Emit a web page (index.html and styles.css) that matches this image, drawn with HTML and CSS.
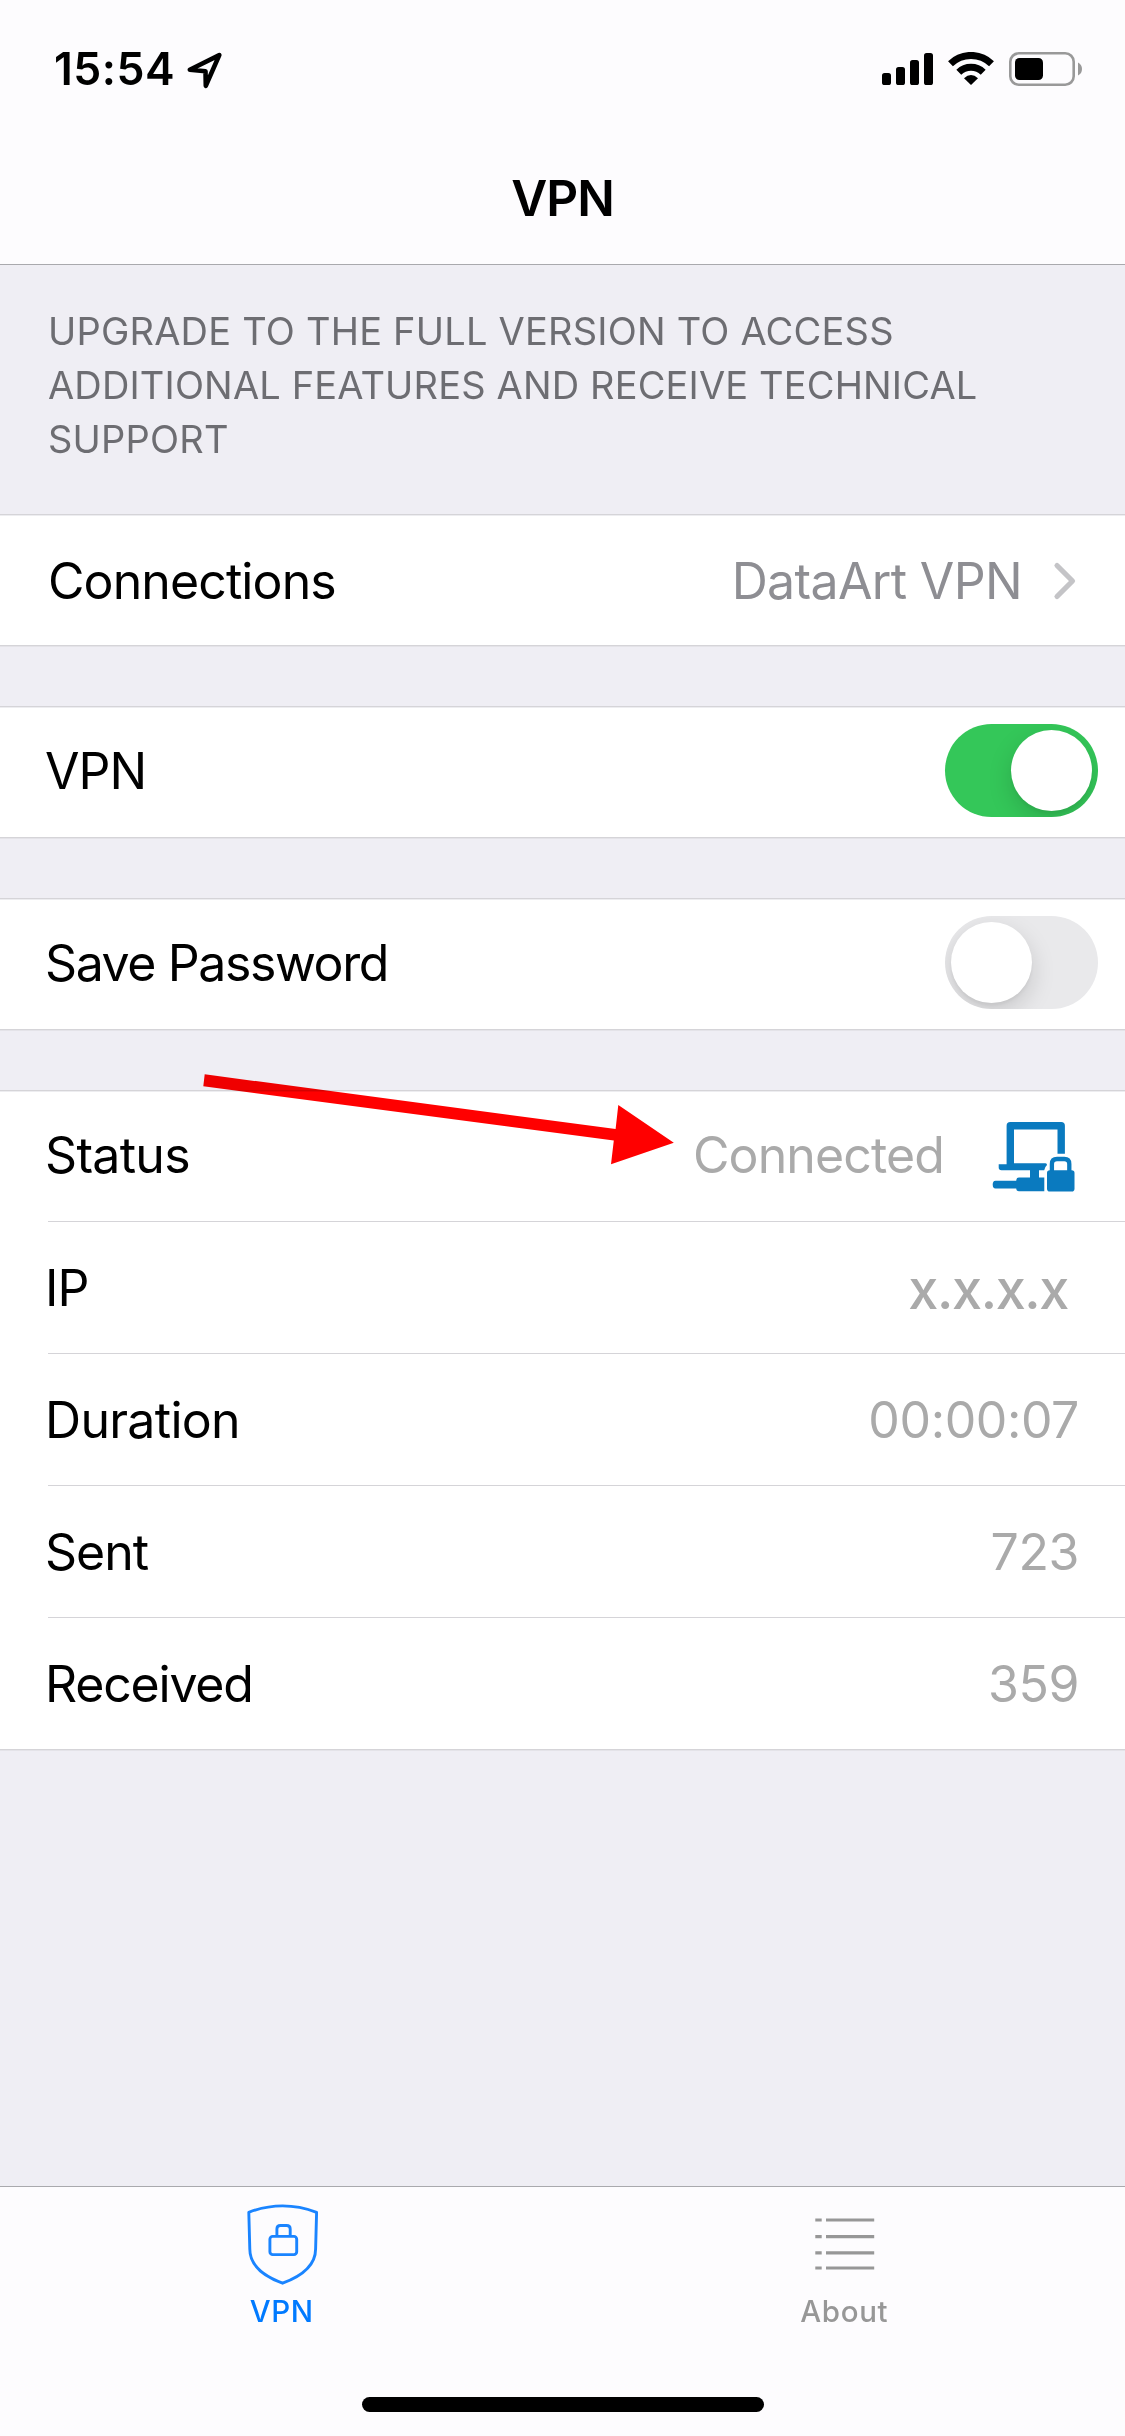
FILE: index.html
```html
<!DOCTYPE html>
<html lang="en">
<head>
<meta charset="utf-8">
<title>VPN</title>
<link rel="stylesheet" href="styles.css">
</head>
<body>
<div class="screen">
  <header class="header">
    <div class="status-bar">
      <span class="clock">15:54</span>
      <svg class="location" width="36" height="37" viewBox="0 0 36 37"><path d="M2.8 17.8 32.3 3.1 18.8 33.8 18.5 19.2Z" fill="none" stroke="#000" stroke-width="4.6" stroke-linejoin="round"/></svg>
      <svg class="signal" width="51" height="32" viewBox="0 0 51 32"><rect y="20" width="9" height="12" rx="2.6"/><rect x="14" y="14" width="9" height="18" rx="2.6"/><rect x="28" y="7" width="9" height="25" rx="2.6"/><rect x="42" width="9" height="32" rx="2.6"/></svg>
      <svg class="wifi" width="46" height="33" viewBox="0 0 46 33"><g fill="none" stroke="#000" stroke-width="7"><path d="M2.5 11.7A29.5 29.5 0 0 1 43.5 11.7"/><path d="M10.8 20.2A17.5 17.5 0 0 1 35.2 20.2"/></g><path d="M16 26.2Q23 20 30 26.2L23 33Z"/></svg>
      <svg class="battery" width="73" height="34" viewBox="0 0 73 34"><rect x="1.3" y="1.3" width="63.4" height="31.4" rx="8.5" fill="none" stroke="#999" stroke-width="2.6"/><rect x="6" y="6" width="28" height="22" rx="4.5"/><path d="M69 10.5Q73 12.5 73 17T69 23.5Z" fill="#999"/></svg>
    </div>
    <h1 class="title">VPN</h1>
  </header>

  <main class="content">
    <p class="notice">UPGRADE TO THE FULL VERSION TO ACCESS<br><span class="tight">ADDITIONAL FEATURES AND RECEIVE TECHNICAL</span><br>SUPPORT</p>

    <section class="group">
      <div class="row link">
        <span class="label connections">Connections</span>
        <span class="detail">DataArt VPN</span>
        <svg class="chevron" width="24" height="40" viewBox="0 0 24 40"><path d="M4 4.5 19.5 20 4 35.5" fill="none" stroke="#c4c4c7" stroke-width="5.2" stroke-linecap="round" stroke-linejoin="round"/></svg>
      </div>
    </section>
    <section class="group">
      <div class="row">
        <span class="label">VPN</span>
        <span class="toggle on"><span class="knob"></span></span>
      </div>
    </section>
    <section class="group">
      <div class="row">
        <span class="label save">Save Password</span>
        <span class="toggle"><span class="knob"></span></span>
      </div>
    </section>
    <section class="group">
      <div class="row">
        <span class="label loose">Status</span>
        <span class="value connected">Connected</span>
        <svg class="computer" width="84" height="72" viewBox="992 1121 84 72" fill="#0a7abf"><path d="M1010.3 1166V1125.7H1061.2V1153.7" fill="none" stroke="#0a7abf" stroke-width="7.4" stroke-linejoin="round"/><path d="M998.7 1164.3H1008V1163.2H1045.5Q1047 1163.2 1047 1165Q1044.7 1167 1044.2 1170.3H1001.5Q998.7 1170.3 998.7 1167.5Z"/><path d="M1030 1170H1039V1177.5H1044.3V1191.2H1019Q1016.2 1191.2 1016.2 1188.5H995.5Q992.7 1188.5 992.7 1184.6T995.5 1180.7H1016.2Q1016.2 1177.5 1019 1177.5H1030Z"/><path d="M1051.9 1172V1164Q1051.9 1159 1057 1159H1064.3Q1069.3 1159 1069.3 1164V1172" fill="none" stroke="#0a7abf" stroke-width="4.3"/><rect x="1047" y="1170.2" width="27.5" height="21.4" rx="2.8"/></svg>
      </div>
      <div class="row">
        <span class="label">IP</span>
        <span class="value ip">x.x.x.x</span>
      </div>
      <div class="row">
        <span class="label loose">Duration</span>
        <span class="value num">00:00:07</span>
      </div>
      <div class="row">
        <span class="label">Sent</span>
        <span class="value num">723</span>
      </div>
      <div class="row">
        <span class="label received">Received</span>
        <span class="value num">359</span>
      </div>
    </section>
  </main>

  <nav class="tabs">
    <div class="tab active">
      <svg width="76" height="84" viewBox="245 2203 76 84" fill="none" stroke="#1a84ff" stroke-width="2.9" stroke-linejoin="round"><path d="M248.8 2212.3Q282.5 2199.5 316.6 2212.3L315.6 2249C315.6 2266 302 2276 282.6 2283.2C263 2276 249.8 2266 249.8 2249Z"/><rect x="269.9" y="2236.4" width="26.8" height="18.2" rx="2.8"/><path d="M276.9 2236V2229Q276.9 2225.5 280.4 2225.5H286.6Q290.2 2225.5 290.2 2229V2236"/></svg>
      <span>VPN</span>
    </div>
    <div class="tab about">
      <svg width="60" height="84" viewBox="815 2203 60 84" fill="none" stroke="#979797" stroke-width="3.2"><path d="M815.3 2220h6.4m4.3 0h48.2M815.3 2236.6h6.4m4.3 0h48.2M815.3 2252.8h6.4m4.3 0h48.2M815.3 2268h6.4m4.3 0h48.2"/></svg>
      <span>About</span>
    </div>
    <div class="home"></div>
  </nav>

  <svg class="arrow" width="472" height="92" viewBox="203 1073 472 92"><path d="M204.7 1074.3 615.6 1129 618.3 1105 673.8 1142.7 611 1164.3 613.8 1140.4 203.3 1086.3Z" fill="#f00"/></svg>
</div>
</body>
</html>
```
FILE: styles.css
```css
* { box-sizing: border-box; }
body { margin: 0; background: #efeef4; font-family: Inter, "Liberation Sans", sans-serif; color: #000; }
svg { display: block; flex: none; }

.screen { position: relative; display: flex; flex-direction: column; width: 1125px; height: 2436px; overflow: hidden; }

.header { height: 265px; background: #fdfcfe; border-bottom: 1px solid #a9a9ad; }
.status-bar { display: flex; align-items: flex-start; height: 132px; padding: 52px 43px 0 54px; }
.clock { width: 133px; margin-top: -11px; font-size: 44.5px; line-height: 56px; font-weight: 600; letter-spacing: .5px; white-space: nowrap; }
.signal { margin: 1px 15px 0 auto; }
.wifi { margin-right: 15px; }
.title { margin: 0; font-size: 49.5px; line-height: 132px; font-weight: 600; letter-spacing: -1px; text-align: center; }

.content { flex: 1; }
.notice { margin: 0; height: 249px; padding: 39px 48px 0; font-size: 38px; line-height: 54px; letter-spacing: .21px; color: #6d6d72; white-space: nowrap; }
.tight { letter-spacing: .15px; }

.group { margin-bottom: 60px; background: #fff; border-top: 1px solid #d5d4d8; box-shadow: inset 0 1px #ededf0, 0 1px #e4e3e8; }
.row { display: flex; align-items: center; height: 132px; margin-left: 48px; border-bottom: 1px solid #d5d4d8; }
.row:first-child { height: 131px; }
.row:last-child { margin-left: 0; padding-left: 48px; }
.label { margin-left: -3px; font-size: 50px; line-height: 60px; letter-spacing: -1px; }
.detail { margin-left: auto; font-size: 50px; line-height: 60px; letter-spacing: -.65px; color: #8e8e93; }
.link { padding-top: 2px; }
.connections { margin-left: 0; letter-spacing: -.9px; }
.save { letter-spacing: -1.4px; }
.loose { letter-spacing: -.7px; }
.received { letter-spacing: -1.2px; }
.chevron { margin: 0 48px 1px 31px; }
.value { margin-left: auto; font-size: 50px; line-height: 60px; color: #aaa; }
.row:first-child:not(.link) .label, .row:first-child .value { margin-bottom: 2px; }
.connected { margin-right: 48px; letter-spacing: -.88px; }
.computer { margin: 2px 49px 0 0; }
.ip { margin-right: 57px; font-size: 54px; font-weight: 500; letter-spacing: -1.4px; padding-top: 5px; }
.num { margin-right: 46px; letter-spacing: -.4px; }

.toggle { width: 153px; height: 93px; margin: 0 27px 3px auto; padding: 6px; border-radius: 47px; background: #e9e9eb; overflow: hidden; }
.toggle.on { background: #34c759; }
.knob { display: block; width: 81px; height: 81px; border-radius: 50%; background: #fff; box-shadow: 0 9px 24px rgba(0, 0, 0, .15), 0 3px 3px rgba(0, 0, 0, .04); }
.on .knob { margin-left: auto; }

.tabs { display: grid; grid-template-columns: 1fr 1fr; grid-template-rows: 210px 40px; height: 250px; background: #fdfcfe; border-top: 1px solid #a9a9ad; }
.tab { display: flex; flex-direction: column; align-items: center; padding-top: 16px; font-size: 29.5px; line-height: 36px; font-weight: 500; letter-spacing: .6px; color: #979797; }
.tab svg { margin-left: 3px; }
.tab span { margin: 6px 0 0 1px; }
.active { color: #007aff; }
.home { grid-column: 1 / 3; justify-self: center; width: 402px; height: 15px; border-radius: 8px; background: #000; }

.arrow { position: absolute; left: 203px; top: 1073px; mix-blend-mode: multiply; }
```
